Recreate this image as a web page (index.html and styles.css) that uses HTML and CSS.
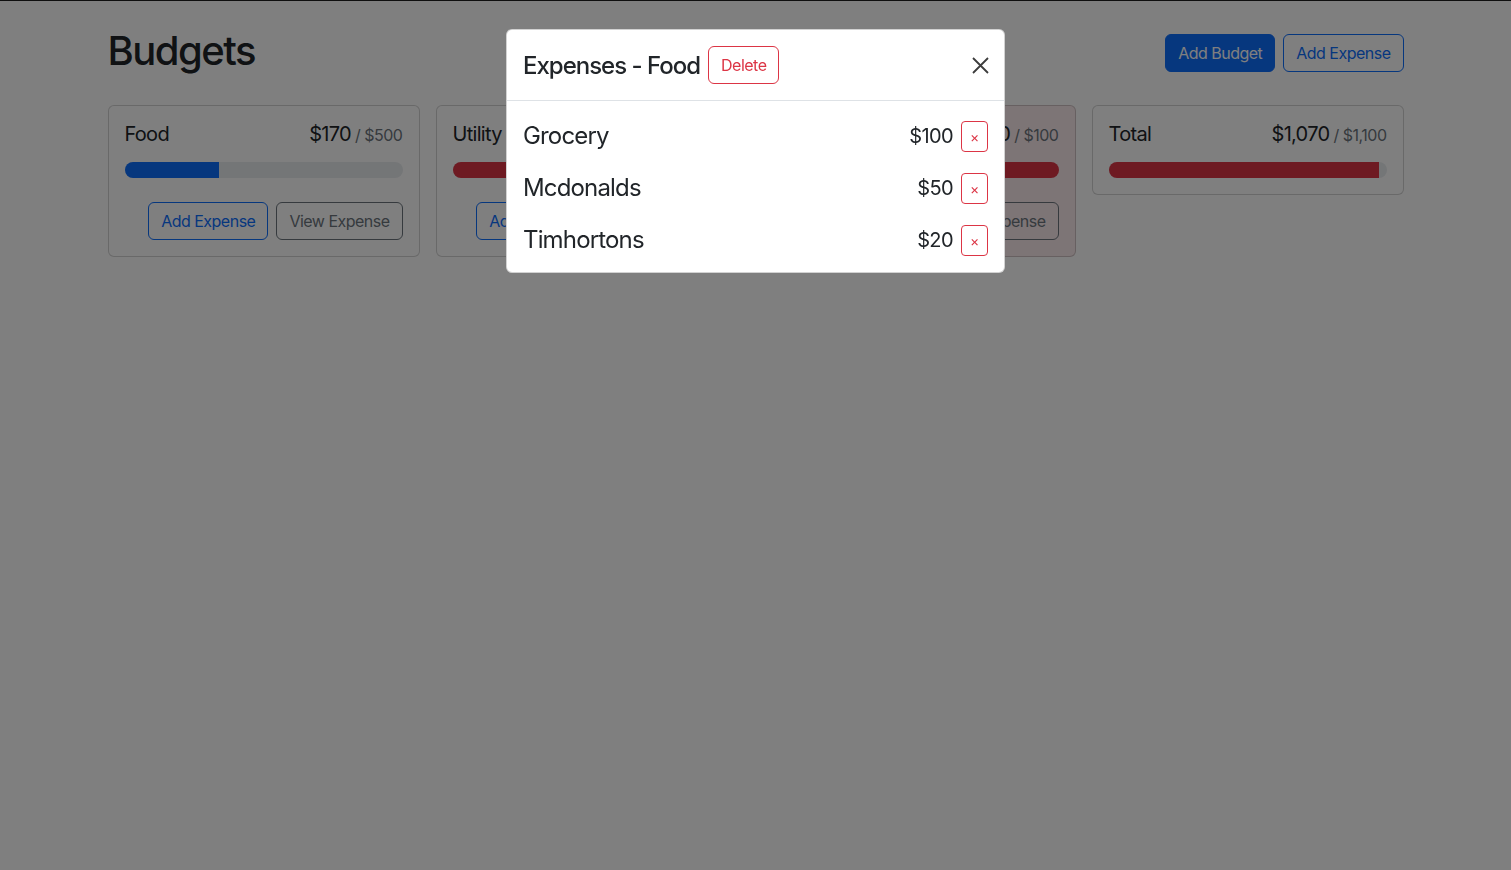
FILE: index.html
```html
<!DOCTYPE html>
<html lang="en">
<head>
<meta charset="utf-8">
<title>Budgets</title>
<link rel="stylesheet" href="styles.css">
</head>
<body>
<div class="container">
  <div class="hstack header">
    <h1 class="title">Budgets</h1>
    <button class="btn btn-primary">Add Budget</button>
    <button class="btn btn-outline-primary">Add Expense</button>
  </div>
  <div class="grid">
    <div class="card">
      <div class="card-body">
        <div class="card-title">
          <div class="name">Food</div>
          <div class="amounts">$170<span class="muted">/ $500</span></div>
        </div>
        <div class="progress"><div class="bar bar-primary" style="width:34%"></div></div>
        <div class="hstack actions">
          <button class="btn btn-outline-primary push">Add Expense</button>
          <button class="btn btn-outline-secondary">View Expense</button>
        </div>
      </div>
    </div>
    <div class="card">
      <div class="card-body">
        <div class="card-title">
          <div class="name">Utility</div>
          <div class="amounts">$450<span class="muted">/ $500</span></div>
        </div>
        <div class="progress"><div class="bar bar-danger" style="width:90%"></div></div>
        <div class="hstack actions">
          <button class="btn btn-outline-primary push">Add Expense</button>
          <button class="btn btn-outline-secondary">View Expense</button>
        </div>
      </div>
    </div>
    <div class="card card-over">
      <div class="card-body">
        <div class="card-title">
          <div class="name">Entertainment</div>
          <div class="amounts">$450<span class="muted">/ $100</span></div>
        </div>
        <div class="progress"><div class="bar bar-danger" style="width:100%"></div></div>
        <div class="hstack actions">
          <button class="btn btn-outline-primary push">Add Expense</button>
          <button class="btn btn-outline-secondary">View Expense</button>
        </div>
      </div>
    </div>
    <div class="card">
      <div class="card-body">
        <div class="card-title">
          <div class="name">Total</div>
          <div class="amounts">$1,070<span class="muted">/ $1,100</span></div>
        </div>
        <div class="progress"><div class="bar bar-danger" style="width:97.27%"></div></div>
      </div>
    </div>
  </div>
</div>

<div class="backdrop"></div>
<div class="modal">
  <div class="modal-dialog">
    <div class="modal-content">
      <div class="modal-header">
        <div class="hstack modal-title">
          <div>Expenses - Food</div>
          <button class="btn btn-outline-danger">Delete</button>
        </div>
        <button class="btn-close" aria-label="Close">
          <svg width="17" height="17" viewBox="0 0 17 17"><path d="M1 1L16 16M16 1L1 16" stroke="#3c3c3c" stroke-width="1.8" fill="none"/></svg>
        </button>
      </div>
      <div class="modal-body">
        <div class="vstack">
          <div class="hstack expense">
            <div class="desc">Grocery</div>
            <div class="amt">$100</div>
            <button class="btn btn-sm btn-outline-danger">&times;</button>
          </div>
          <div class="hstack expense">
            <div class="desc">Mcdonalds</div>
            <div class="amt">$50</div>
            <button class="btn btn-sm btn-outline-danger">&times;</button>
          </div>
          <div class="hstack expense">
            <div class="desc">Timhortons</div>
            <div class="amt">$20</div>
            <button class="btn btn-sm btn-outline-danger">&times;</button>
          </div>
        </div>
      </div>
    </div>
  </div>
</div>
</body>
</html>
```
FILE: styles.css
```css
* { box-sizing: border-box; }
html { border-top: 1px solid #1e1e1e; }
body {
  margin: 0;
  font-family: Inter, "Liberation Sans", sans-serif;
  font-size: 16px;
  line-height: 1.5;
  color: #212529;
  background: #fff;
  height: 869px;
  overflow: hidden;
}
.container {
  max-width: 1320px;
  margin: 24px auto;
  padding: 0 12px;
}
.hstack { display: flex; flex-direction: row; align-items: center; align-self: stretch; }
.vstack { display: flex; flex-direction: column; gap: 16px; }
.header { gap: 8px; margin-bottom: 24px; }
.title {
  margin: 0 auto 6px 0;
  padding-top: 2px;
  font-size: 40px;
  font-weight: 500;
  line-height: 1.2;
  letter-spacing: -0.038em;
}
.btn {
  font-family: inherit;
  font-size: 16px;
  line-height: 1.5;
  padding: 6px 12px;
  border: 1px solid transparent;
  border-radius: 6px;
  background: transparent;
  cursor: pointer;
  letter-spacing: -0.032em;
}
.btn-primary { background: #0d6efd; border-color: #0d6efd; color: #fff; }
.btn-outline-primary { border-color: #0d6efd; color: #0d6efd; }
.btn-outline-secondary { border-color: #6c757d; color: #6c757d; }
.btn-outline-danger { border-color: #dc3545; color: #dc3545; }
.btn-sm { font-size: 14px; padding: 4px 8px; border-radius: 4px; line-height: 1.5; }
.grid {
  display: grid;
  grid-template-columns: repeat(auto-fill, minmax(300px, 1fr));
  gap: 16px;
  align-items: flex-start;
}
.card {
  border: 1px solid rgba(0,0,0,.175);
  border-radius: 6px;
  background: #fff;
}
.card-over { background: rgba(220,53,69,.1); }
.card-body { padding: 16px; }
.card-title {
  display: flex;
  justify-content: space-between;
  align-items: baseline;
  font-size: 20px;
  line-height: 1.2;
  margin-bottom: 16px;
  letter-spacing: -0.035em;
}
.name { margin-right: 8px; }
.amounts { display: flex; align-items: baseline; }
.muted { color: #6c757d; font-size: 16px; margin-left: 4px; letter-spacing: -0.03em; }
.progress {
  height: 16px;
  background: #e9ecef;
  border-radius: 50rem;
  overflow: hidden;
  display: flex;
}
.bar { height: 100%; }
.bar-primary { background: #0d6efd; }
.bar-danger { background: #dc3545; }
.actions { gap: 8px; margin-top: 24px; }
.push { margin-left: auto; }

.backdrop {
  position: fixed;
  inset: 0;
  background: rgba(0,0,0,.5);
}
.modal {
  position: fixed;
  inset: 0;
  overflow: hidden;
}
.modal-dialog {
  max-width: 499px;
  margin: 29px auto;
}
.modal-content {
  background: #fff;
  border: 1px solid rgba(0,0,0,.175);
  border-radius: 6px;
}
.modal-header {
  display: flex;
  align-items: center;
  padding: 16px;
  border-bottom: 1px solid #dee2e6;
}
.modal-title {
  gap: 8px;
  font-size: 24px;
  font-weight: 500;
  line-height: 1.5;
  letter-spacing: -0.042em;
}
.modal-title > div { padding-top: 2px; }
.btn-close {
  margin-left: auto;
  margin-right: -1px;
  width: 17px;
  height: 17px;
  padding: 0;
  border: 0;
  background: transparent;
  display: flex;
}
.modal-body { padding: 17px 16px 14px; }
.expense { gap: 8px; }
.desc { margin-right: auto; font-size: 24px; line-height: 1.5; letter-spacing: -0.035em; }
.amt { font-size: 20px; line-height: 1.5; letter-spacing: -0.03em; }
.expense .btn-sm { width: 27px; padding: 4px 0; text-align: center; }
```
